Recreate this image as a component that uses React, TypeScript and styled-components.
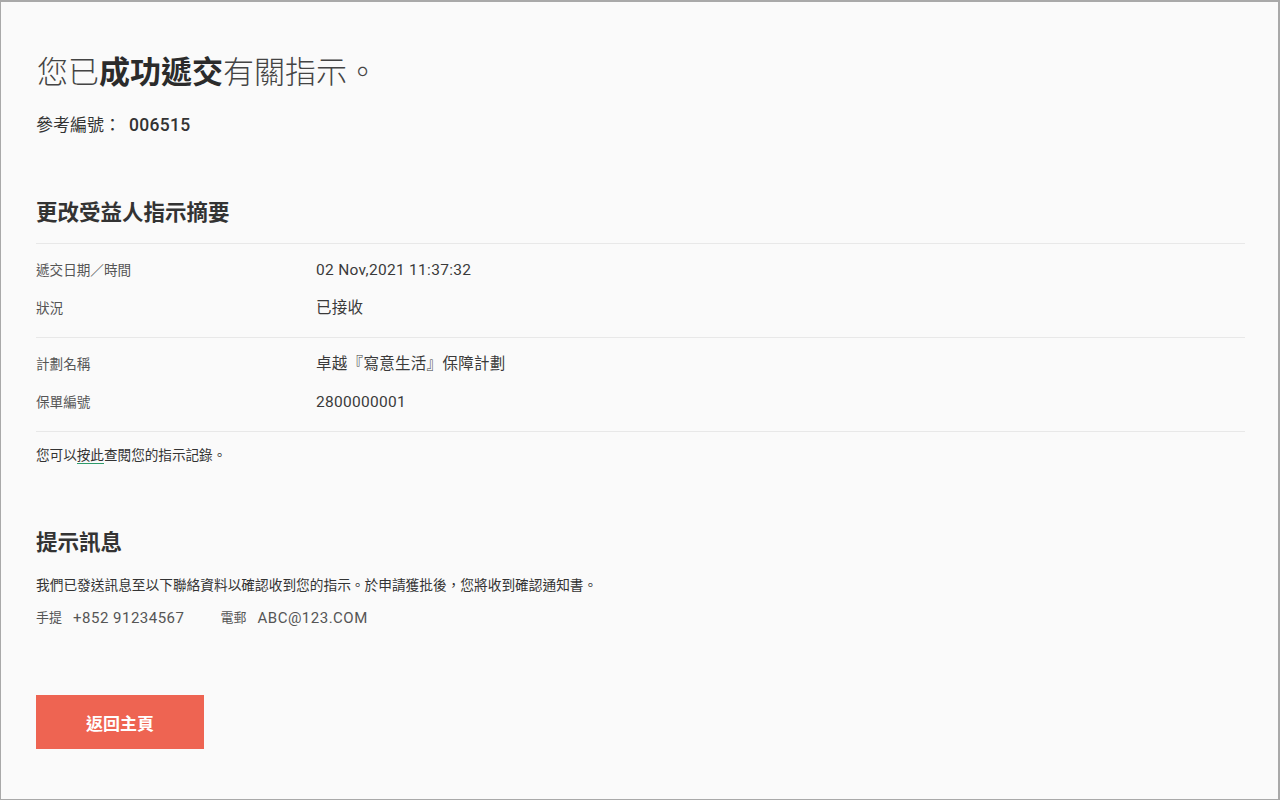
import React from "react";
import styled, { createGlobalStyle } from "styled-components";

const GlobalStyle = createGlobalStyle`
  html, body {
    margin: 0;
    padding: 0;
    background: #ffffff;
  }
  * {
    box-sizing: border-box;
  }
`;

const FONT = `Roboto, "Noto Sans CJK TC", "Noto Sans", sans-serif`;

interface Row {
  label: string;
  value: React.ReactNode;
}

const summaryGroups: Row[][] = [
  [
    { label: "遞交日期／時間", value: "02 Nov,2021 11:37:32" },
    { label: "狀況", value: "已接收" },
  ],
  [
    { label: "計劃名稱", value: "卓越『寫意生活』保障計劃" },
    { label: "保單編號", value: "2800000001" },
  ],
];

const App: React.FC = () => {
  return (
    <>
      <GlobalStyle />
      <Frame>
        <Title>
          您已<strong>成功遞交</strong>有關指示。
        </Title>
        <RefLine>
          參考編號：<RefNo>006515</RefNo>
        </RefLine>

        <SectionTitle>更改受益人指示摘要</SectionTitle>
        {summaryGroups.map((group, i) => (
          <Group key={i}>
            {group.map((row) => (
              <InfoRow key={row.label}>
                <Label>{row.label}</Label>
                <Value>{row.value}</Value>
              </InfoRow>
            ))}
          </Group>
        ))}
        <Note>
          您可以<Link href="#">按此</Link>查閱您的指示記錄。
        </Note>

        <SectionTitle $gap={64}>提示訊息</SectionTitle>
        <Paragraph>
          我們已發送訊息至以下聯絡資料以確認收到您的指示。於申請獲批後，您將收到確認通知書。
        </Paragraph>
        <Contacts>
          <Contact>
            <ContactLabel>手提</ContactLabel>
            <ContactValue>+852 91234567</ContactValue>
          </Contact>
          <Contact>
            <ContactLabel>電郵</ContactLabel>
            <ContactValue>ABC@123.COM</ContactValue>
          </Contact>
        </Contacts>

        <HomeButton type="button">返回主頁</HomeButton>
      </Frame>
    </>
  );
};

const Frame = styled.div`
  width: 1280px;
  height: 800px;
  background: #fafafa;
  border: 1px solid #a9a9a9;
  border-top-width: 2px;
  border-right-width: 2px;
  padding: 52px 33px 0 35px;
  font-family: ${FONT};
  color: #333333;
  display: flex;
  flex-direction: column;
`;

const Title = styled.h1`
  margin: 0 0 0 1px;
  font-size: 31px;
  line-height: 37px;
  font-weight: 300;
  color: #444444;

  strong {
    font-weight: 700;
    color: #2b2b2b;
  }
`;

const RefLine = styled.div`
  margin-top: 22px;
  font-size: 17px;
  line-height: 24px;
  color: #333333;
`;

const RefNo = styled.span`
  margin-left: 8px;
  font-weight: 500;
  font-size: 17.5px;
  letter-spacing: 0.3px;
`;

const SectionTitle = styled.h2<{ $gap?: number }>`
  margin: ${({ $gap }) => $gap ?? 62}px 0 0;
  font-size: 21.5px;
  line-height: 28px;
  font-weight: 700;
  color: #333333;
  padding-bottom: 16px;
`;

const Group = styled.div`
  border-top: 1px solid #e8e8e8;
  padding: 7px 0 10px;
`;

const InfoRow = styled.div`
  display: grid;
  grid-template-columns: 280px 1fr;
  align-items: center;
  height: 38px;
`;

const Label = styled.div`
  font-size: 13.6px;
  color: #555555;
  line-height: 20px;
`;

const Value = styled.div`
  font-size: 15.5px;
  color: #3a3a3a;
  line-height: 22px;
  letter-spacing: 0.3px;
`;

const Note = styled.div`
  border-top: 1px solid #e8e8e8;
  padding-top: 13px;
  font-size: 13.6px;
  line-height: 20px;
  color: #333333;
`;

const Link = styled.a`
  color: inherit;
  text-decoration: none;
  border-bottom: 1px solid #2e9a6a;
`;

const Paragraph = styled.p`
  margin: 2px 0 0;
  font-size: 13.7px;
  line-height: 20px;
  color: #333333;
`;

const Contacts = styled.div`
  display: flex;
  gap: 36px;
  margin-top: 12px;
  line-height: 22px;
`;

const Contact = styled.div`
  display: flex;
  align-items: center;
  gap: 11px;
`;

const ContactLabel = styled.span`
  font-size: 13px;
  color: #555555;
`;

const ContactValue = styled.span`
  font-size: 15px;
  color: #555555;
  letter-spacing: 0.5px;
`;

const HomeButton = styled.button`
  margin-top: 66px;
  width: 168px;
  height: 54px;
  border: none;
  background: #ee6452;
  color: #ffffff;
  font-family: ${FONT};
  font-size: 17px;
  font-weight: 700;
  cursor: pointer;
`;

export default App;
